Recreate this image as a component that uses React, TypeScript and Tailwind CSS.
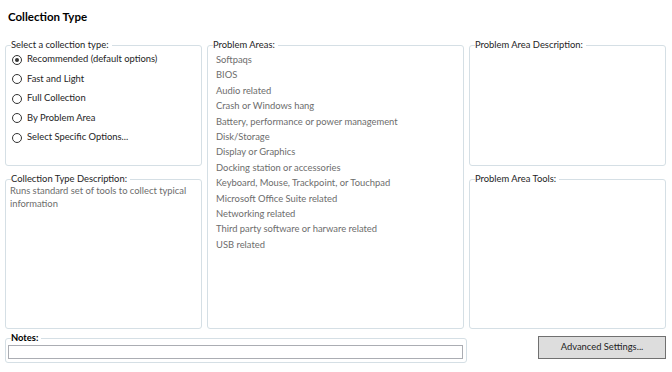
import type { ReactNode } from "react"

const PROBLEM_AREAS = [
  "Softpaqs",
  "BIOS",
  "Audio related",
  "Crash or Windows hang",
  "Battery, performance or power management",
  "Disk/Storage",
  "Display or Graphics",
  "Docking station or accessories",
  "Keyboard, Mouse, Trackpoint, or Touchpad",
  "Microsoft Office Suite related",
  "Networking related",
  "Third party software or harware related",
  "USB related",
]

const COLLECTION_TYPES = [
  "Recommended (default options)",
  "Fast and Light",
  "Full Collection",
  "By Problem Area",
  "Select Specific Options...",
]

function Group({
  label,
  className = "",
  legendClass = "leading-[14px]",
  children,
}: {
  label: string
  className?: string
  legendClass?: string
  children?: ReactNode
}) {
  return (
    <fieldset className={`rounded-[3px] border border-[#d5dfe5] ${className}`}>
      <legend className={`ml-[5px] px-0 pr-[3px] ${legendClass}`}>{label}</legend>
      {children}
    </fieldset>
  )
}

function Radio({ label, checked }: { label: string; checked?: boolean }) {
  return (
    <div className="flex h-[15px] items-center gap-[5px]">
      <span className="flex h-[10px] w-[10px] items-center justify-center rounded-full border border-[#333333] bg-white">
        {checked && <span className="h-[4px] w-[4px] rounded-full bg-[#333333]" />}
      </span>
      <span>{label}</span>
    </div>
  )
}

export default function App() {
  return (
    <div className="h-[372px] w-[672px] bg-white pl-[5px] pr-[6px] font-['Lato','Noto_Sans',sans-serif] text-[9.4px] text-[#1e1e1e]">
      <div className="h-[38px] pl-[3px] pt-[9px] text-[11.5px] font-bold leading-[16px] text-black">Collection Type</div>

      <div className="flex h-[291px] gap-[5px]">
        {/* Left column */}
        <div className="flex w-[197px] flex-col gap-[6px]">
          <Group label="Select a collection type:" className="h-[128px]">
            <div className="flex flex-col gap-[4.5px] pl-[6px]">
              {COLLECTION_TYPES.map((t, i) => (
                <Radio key={t} label={t} checked={i === 0} />
              ))}
            </div>
          </Group>
          <Group label="Collection Type Description:" className="flex-1">
            <p className="-mt-[1px] pl-[4px] pr-[6px] leading-[12.5px] text-[#6d6d6d]">
              Runs standard set of tools to collect typical information
            </p>
          </Group>
        </div>

        {/* Middle column */}
        <Group label="Problem Areas:" className="w-[257px]">
          <ul className="pl-[8px] leading-[15.4px] text-[#6d6d6d]">
            {PROBLEM_AREAS.map((p) => (
              <li key={p}>{p}</li>
            ))}
          </ul>
        </Group>

        {/* Right column */}
        <div className="flex w-[197px] flex-col gap-[6px]">
          <Group label="Problem Area Description:" className="h-[128px]" />
          <Group label="Problem Area Tools:" className="flex-1" />
        </div>
      </div>

      <div className="mt-[3px] flex items-start">
        <Group label="Notes:" className="h-[31px] w-[462px]" legendClass="font-bold leading-[12px] text-black">
          <div className="ml-[2px] mt-[1px] h-[14px] w-[455px] border border-[#abadb3] bg-white" />
        </Group>
        <button
          type="button"
          className="ml-[71px] mt-[4px] h-[23px] w-[128px] border border-[#707070] bg-[#dddddd] text-[9.4px] text-[#1e1e1e]"
        >
          Advanced Settings...
        </button>
      </div>
    </div>
  )
}
